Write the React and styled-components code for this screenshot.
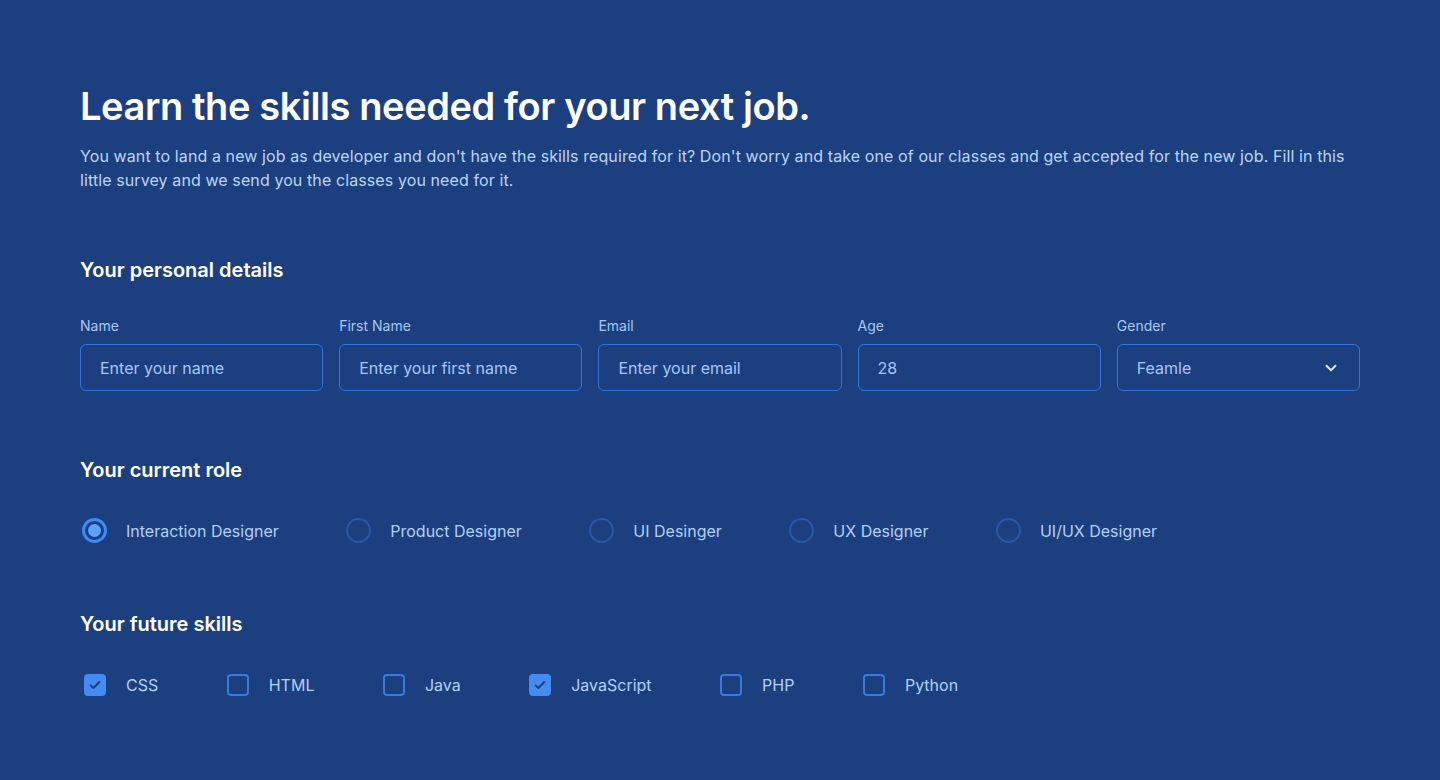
import React from "react";
import styled, { createGlobalStyle } from "styled-components";

const GlobalStyle = createGlobalStyle`
  html, body {
    margin: 0;
    padding: 0;
    background: #1c3f7f;
  }
  * { box-sizing: border-box; }
`;

const Page = styled.main`
  min-height: 780px;
  background: #1c3f7f;
  padding: 82px 80px 60px;
  font-family: Inter, "Noto Sans", sans-serif;
  color: #ffffff;
`;

const Title = styled.h1`
  margin: 0;
  font-size: 38px;
  line-height: 48px;
  font-weight: 600;
  letter-spacing: -0.4px;
  color: #ffffff;
`;

const Intro = styled.p`
  margin: 14px 0 0;
  font-size: 16px;
  line-height: 24px;
  letter-spacing: 0.1px;
  color: #bcd5f8;
  max-width: 1275px;
`;

const Section = styled.section`
  margin-top: ${(p) => p.$top}px;
`;

const SectionTitle = styled.h2`
  margin: 0;
  font-size: 20px;
  line-height: 28px;
  font-weight: 600;
  color: #ffffff;
`;

const FieldGrid = styled.div`
  display: grid;
  grid-template-columns: repeat(5, 1fr);
  gap: 16px;
  margin-top: 33px;
`;

const Field = styled.label`
  display: flex;
  flex-direction: column;
  gap: 9px;
`;

const Label = styled.span`
  font-size: 14px;
  line-height: 18px;
  color: #a9c7f3;
`;

const Box = styled.div`
  height: 47px;
  border: 1px solid #3473dd;
  border-radius: 6px;
  padding: 0 19px;
  display: flex;
  align-items: center;
  justify-content: space-between;
  font-size: 16px;
  color: #a8c6f6;
`;

const Input = styled.input`
  width: 100%;
  border: none;
  background: transparent;
  outline: none;
  font-family: Inter, "Noto Sans", sans-serif;
  font-size: 16px;
  padding: 0;
  color: #a8c6f6;
  &::placeholder {
    color: #a8c6f6;
  }
`;

const Options = styled.div`
  display: flex;
  align-items: center;
  gap: ${(p) => p.$gap}px;
  margin-top: ${(p) => p.$top}px;
  padding-left: 2px;
`;

const Option = styled.label`
  display: flex;
  align-items: center;
  gap: ${(p) => p.$gap}px;
  font-size: 16px;
  line-height: 24px;
  color: #b3d0f8;
`;

const Radio = styled.span`
  width: 25px;
  height: 25px;
  border-radius: 50%;
  border: ${(p) => (p.$on ? "3px solid #3c8cf6" : "2px solid #2b58a6")};
  display: flex;
  align-items: center;
  justify-content: center;
  &::after {
    content: "";
    width: 13px;
    height: 13px;
    border-radius: 50%;
    background: #5ea2f8;
    display: ${(p) => (p.$on ? "block" : "none")};
  }
`;

const Check = styled.span`
  width: 22px;
  height: 22px;
  margin-left: 2px;
  border-radius: 4px;
  border: 2px solid ${(p) => (p.$on ? "#448cf4" : "#3a78e2")};
  background: ${(p) => (p.$on ? "#448cf4" : "transparent")};
  display: flex;
  align-items: center;
  justify-content: center;
`;

const Chevron = () => (
  <svg width="18" height="18" viewBox="0 0 24 24" fill="none" stroke="#dbe8fc" strokeWidth="2.6" strokeLinecap="round" strokeLinejoin="round">
    <path d="M6 9l6 6 6-6" />
  </svg>
);

const Tick = () => (
  <svg width="16" height="16" viewBox="0 0 24 24" fill="none" stroke="#1c3f7f" strokeWidth="3" strokeLinecap="round" strokeLinejoin="round">
    <path d="M5.5 12.5l4 4L18.5 7.5" />
  </svg>
);

const fields = [
  { label: "Name", placeholder: "Enter your name" },
  { label: "First Name", placeholder: "Enter your first name" },
  { label: "Email", placeholder: "Enter your email" },
  { label: "Age", value: "28" },
];

const roles = [
  "Interaction Designer",
  "Product Designer",
  "UI Desinger",
  "UX Designer",
  "UI/UX Designer",
];

const skills = [
  { name: "CSS", on: true },
  { name: "HTML" },
  { name: "Java" },
  { name: "JavaScript", on: true },
  { name: "PHP" },
  { name: "Python" },
];

const App = () => {
  return (
    <Page>
      <GlobalStyle />
      <Title>Learn the skills needed for your next job.</Title>
      <Intro>
        You want to land a new job as developer and don't have the skills required for it? Don't worry and take one of our classes and get accepted for the new job. Fill in this little survey and we send you the classes you need for it.
      </Intro>

      <Section $top={64}>
        <SectionTitle>Your personal details</SectionTitle>
        <FieldGrid>
          {fields.map((f) => (
            <Field key={f.label}>
              <Label>{f.label}</Label>
              <Box>
                <Input placeholder={f.placeholder} defaultValue={f.value} />
              </Box>
            </Field>
          ))}
          <Field>
            <Label>Gender</Label>
            <Box>
              <span>Feamle</span>
              <Chevron />
            </Box>
          </Field>
        </FieldGrid>
      </Section>

      <Section $top={65}>
        <SectionTitle>Your current role</SectionTitle>
        <Options $gap={67.5} $top={34}>
          {roles.map((r, i) => (
            <Option key={r} $gap={19}>
              <Radio $on={i === 0} />
              {r}
            </Option>
          ))}
        </Options>
      </Section>

      <Section $top={67}>
        <SectionTitle>Your future skills</SectionTitle>
        <Options $gap={66.5} $top={35}>
          {skills.map((s) => (
            <Option key={s.name} $gap={20}>
              <Check $on={s.on}>{s.on && <Tick />}</Check>
              {s.name}
            </Option>
          ))}
        </Options>
      </Section>
    </Page>
  );
};

export default App;
